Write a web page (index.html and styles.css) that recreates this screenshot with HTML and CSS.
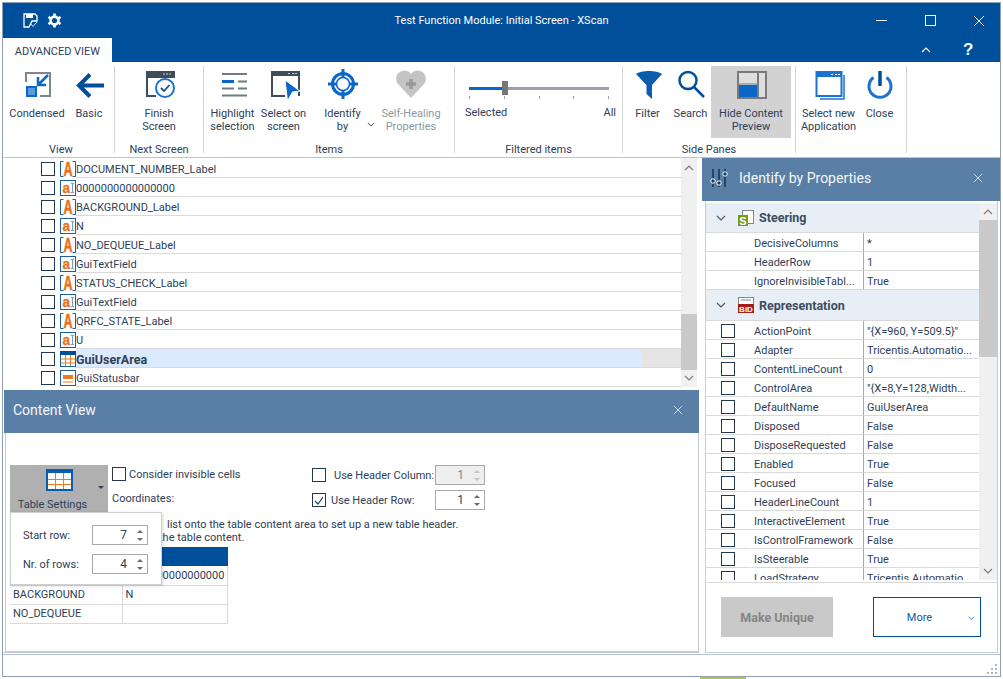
FILE: index.html
```html
<!DOCTYPE html>
<html lang="en">
<head>
    <meta charset="UTF-8">
    <title>Test Function Module: Initial Screen - XScan</title>
    <link rel="stylesheet" href="styles.css">
</head>
<body>
    <svg class="defs" width="0" height="0">
        <symbol id="ico-label" viewBox="0 0 16 16">
            <path d="M3.5 .5H.5V15.5H3.5M12.5 .5H15.5V15.5H12.5" fill="none" stroke="#1b5fa8"/>
            <text x="3.5" y="15" textLength="9" lengthAdjust="spacingAndGlyphs" class="ico-letter big">A</text>
        </symbol>
        <symbol id="ico-text" viewBox="0 0 16 16">
            <rect x=".5" y=".5" width="15" height="15" fill="#fff" stroke="#1b5fa8"/>
            <path d="M11 3.5H14M12.5 3.5V12.5M11 12.5H14" fill="none" stroke="#6f9ccc"/>
            <text x="2.5" y="13" textLength="7.5" lengthAdjust="spacingAndGlyphs" class="ico-letter">a</text>
        </symbol>
        <symbol id="ico-table" viewBox="0 0 16 16">
            <rect x=".5" y=".5" width="15" height="15" fill="#fff" stroke="#1b5fa8"/>
            <rect width="16" height="4" fill="#004f9b"/>
            <path d="M1 8H15M1 12H15M5.5 4V15M10.5 4V15" stroke="#ef7a1a"/>
        </symbol>
        <symbol id="ico-status" viewBox="0 0 16 16">
            <rect x=".5" y=".5" width="15" height="15" fill="#fff" stroke="#1b5fa8"/>
            <rect x="3" y="5" width="10" height="4" fill="#ef7a1a"/>
            <path d="M3 12H13" stroke="#ef7a1a"/>
        </symbol>
        <symbol id="ico-x" viewBox="0 0 12 12">
            <path d="M1 1L11 11M11 1L1 11" fill="none" stroke="currentColor"/>
        </symbol>
        <symbol id="ico-down" viewBox="0 0 10 6">
            <path d="M1 1L5 5L9 1" fill="none" stroke="currentColor" stroke-width="1.2"/>
        </symbol>
        <symbol id="ico-up" viewBox="0 0 10 6">
            <path d="M1 5L5 1L9 5" fill="none" stroke="currentColor" stroke-width="1.2"/>
        </symbol>
    </svg>

    <div class="window">
        <div class="titlebar">
            <div class="title-side quick-icons">
                <svg width="15" height="15" viewBox="0 0 15 15"><path d="M1 1H12L14 3V8H9L6 14H1Z" fill="none" stroke="#fff" stroke-width="1.3"/><rect x="3" y="1" width="7" height="4" fill="#fff"/><path d="M8 11L10 13.5L14 9" fill="none" stroke="#cfe0f2"/></svg>
                <svg width="15" height="15" viewBox="0 0 15 15"><circle cx="7.5" cy="7.5" r="3.9" fill="none" stroke="#fff" stroke-width="2.6"/><path d="M7.5 .5V3M7.5 12V14.5M1.4 4L3.6 5.3M11.4 9.7L13.6 11M1.4 11L3.6 9.7M11.4 5.3L13.6 4" stroke="#fff" stroke-width="2.6"/></svg>
            </div>
            <div class="title-text">Test Function Module: Initial Screen - XScan</div>
            <div class="title-side window-btns">
                <svg class="win-min" width="11" height="11" viewBox="0 0 11 11"><path d="M0 5.5H11" stroke="#fff"/></svg>
                <svg class="win-max" width="11" height="11" viewBox="0 0 11 11"><rect x=".5" y=".5" width="10" height="10" fill="none" stroke="#fff"/></svg>
                <svg class="win-close" width="12" height="12"><use href="#ico-x"/></svg>
            </div>
        </div>
        <div class="tabbar">
            <div class="tab">ADVANCED VIEW</div>
            <svg class="tab-collapse" width="10" height="6"><use href="#ico-up"/></svg>
            <div class="tab-help">?</div>
        </div>

        <div class="ribbon">
            <div class="group group-view">
                <div class="group-btns">
                    <div class="rbtn w-58">
                        <svg class="ico" viewBox="0 0 32 32"><path d="M5 14V5H29V28H19" fill="none" stroke="#7b8791" stroke-width="2"/><rect x="6" y="19" width="9" height="9" fill="#5b9be0" stroke="#0a66c8" stroke-width="2"/><path d="M27 7L17 17M17 9V17H25" fill="none" stroke="#0a66c8" stroke-width="2.5"/></svg>
                        <div class="rbtn-label">Condensed</div>
                    </div>
                    <div class="rbtn w-46">
                        <svg class="ico" viewBox="0 0 32 32"><path d="M31 17.5H7M17 6.5L6 17.5L17 28.5" fill="none" stroke="#004f9b" stroke-width="4"/></svg>
                        <div class="rbtn-label">Basic</div>
                    </div>
                </div>
                <div class="group-name">View</div>
            </div>
            <div class="group group-next">
                <div class="group-btns">
                    <div class="rbtn w-88">
                        <svg class="ico" viewBox="0 0 32 32"><path d="M4 4H31V9H4ZM4 9V28H13" fill="none" stroke="#3f4c5a" stroke-width="2"/><rect x="4" y="3" width="27" height="6" fill="#3f4c5a"/><path d="M23 6H25M26 6H28M20 6H22" stroke="#c7ced6"/><circle cx="22" cy="20" r="9" fill="#fff" stroke="#1a73d0" stroke-width="2"/><path d="M18 20L21 23L26.5 17" fill="none" stroke="#0e4f9b" stroke-width="1.8"/></svg>
                        <div class="rbtn-label">Finish<br>Screen</div>
                    </div>
                </div>
                <div class="group-name">Next Screen</div>
            </div>
            <div class="group group-items">
                <div class="group-btns">
                    <div class="rbtn w-53 ml-2">
                        <svg class="ico" viewBox="0 0 32 32"><path d="M5 6H30M21 13.5H30M5 20.5H17M21 20.5H30M5 27.5H30" stroke="#6f7b87" stroke-width="2"/><path d="M5 13.5H17" stroke="#0a66c8" stroke-width="3"/></svg>
                        <div class="rbtn-label">Highlight<br>selection</div>
                    </div>
                    <div class="rbtn w-49">
                        <svg class="ico" viewBox="0 0 32 32"><path d="M4 4H31V28M4 4V28H17" fill="none" stroke="#3f4c5a" stroke-width="2"/><rect x="3" y="3" width="28" height="5" fill="#3f4c5a"/><path d="M20 5.5H22M24 5.5H26M27 5.5H29" stroke="#c7ced6"/><path d="M17 12L32 23L24.5 24L19.5 33Z" fill="#0a66c8" stroke="#fff"/></svg>
                        <div class="rbtn-label">Select on<br>screen</div>
                    </div>
                    <div class="rbtn w-69">
                        <svg class="ico" viewBox="0 0 32 32"><circle cx="16" cy="16" r="10.5" fill="none" stroke="#0a66c8" stroke-width="3"/><circle cx="16" cy="16" r="6.5" fill="none" stroke="#0a66c8" stroke-width="1.5"/><path d="M16 1V10M16 22V31M1 16H10M22 16H31" stroke="#0a66c8" stroke-width="3"/></svg>
                        <div class="rbtn-label">Identify<br>by</div>
                        <svg class="rbtn-drop" width="8" height="5"><use href="#ico-down"/></svg>
                    </div>
                    <div class="rbtn w-68 is-disabled">
                        <svg class="ico" viewBox="0 0 32 32"><path d="M16 30L3 16C-2 9 4 2 10 2.5C13 2.7 15 4.5 16 6C17 4.5 19 2.7 22 2.5C28 2 34 9 29 16Z" fill="#c4c4c4"/><path d="M16 11V21M11 16H21" stroke="#9a9a9a" stroke-width="3.5"/></svg>
                        <div class="rbtn-label">Self-Healing<br>Properties</div>
                    </div>
                </div>
                <div class="group-name">Items</div>
            </div>
            <div class="group group-filter">
                <div class="slider">
                    <div class="slider-track"><div class="slider-fill"></div><div class="slider-thumb"></div></div>
                    <div class="slider-ticks"><i></i><i></i><i></i><i></i><i></i></div>
                    <div class="slider-labels"><span>Selected</span><span>All</span></div>
                </div>
                <div class="group-name">Filtered items</div>
            </div>
            <div class="group group-panes">
                <div class="group-btns">
                    <div class="rbtn w-45 ml-2">
                        <svg class="ico" viewBox="0 0 32 32"><path d="M4 6C9 2 25 2 30 6L20 17V31L14.5 26V17Z" fill="#0a5cad"/></svg>
                        <div class="rbtn-label">Filter</div>
                    </div>
                    <div class="rbtn w-41">
                        <svg class="ico" viewBox="0 0 32 32"><circle cx="13" cy="12.5" r="8.5" fill="none" stroke="#004f9b" stroke-width="2.5"/><path d="M19 19L29 29" stroke="#004f9b" stroke-width="2.5"/></svg>
                        <div class="rbtn-label">Search</div>
                    </div>
                    <div class="rbtn w-80 is-active">
                        <svg class="ico" viewBox="0 0 32 32"><rect x="3" y="4" width="28" height="26" fill="#dedede" stroke="#7a7a7a" stroke-width="2"/><path d="M23 4V30" stroke="#7a7a7a" stroke-width="2"/><path d="M3 16H23" stroke="#7a7a7a"/><rect x="4" y="17" width="18" height="12" fill="#0a66c8"/></svg>
                        <div class="rbtn-label">Hide Content<br>Preview</div>
                    </div>
                </div>
                <div class="group-name">Side Panes</div>
            </div>
            <div class="group group-app">
                <div class="group-btns">
                    <div class="rbtn w-61 ml-2">
                        <svg class="ico" viewBox="0 0 32 32"><rect x="3.5" y="4" width="25" height="24" fill="#fff" stroke="#1a73d0" stroke-width="2"/><rect x="3" y="4" width="26" height="5" fill="#1a73d0"/><path d="M18 6.5H20M22 6.5H24M25 6.5H27" stroke="#fff"/><path d="M31 7V31H7" fill="none" stroke="#1a73d0" stroke-width="1.5"/></svg>
                        <div class="rbtn-label">Select new<br>Application</div>
                    </div>
                    <div class="rbtn w-41">
                        <svg class="ico" viewBox="0 0 32 32"><path d="M9.5 9.5A11 11 0 1 0 22.5 9.5" fill="none" stroke="#1a73d0" stroke-width="3"/><path d="M16 3V18" stroke="#004f9b" stroke-width="3.5"/></svg>
                        <div class="rbtn-label">Close</div>
                    </div>
                </div>
            </div>
        </div>

        <div class="main">
            <div class="left">
                <div class="tree">
                    <div class="tree-rows">
                        <div class="tree-row"><span class="check"></span><svg class="row-ico"><use href="#ico-label"/></svg><div class="row-body">DOCUMENT_NUMBER_Label</div></div>
                        <div class="tree-row"><span class="check"></span><svg class="row-ico"><use href="#ico-text"/></svg><div class="row-body">0000000000000000</div></div>
                        <div class="tree-row"><span class="check"></span><svg class="row-ico"><use href="#ico-label"/></svg><div class="row-body">BACKGROUND_Label</div></div>
                        <div class="tree-row"><span class="check"></span><svg class="row-ico"><use href="#ico-text"/></svg><div class="row-body">N</div></div>
                        <div class="tree-row"><span class="check"></span><svg class="row-ico"><use href="#ico-label"/></svg><div class="row-body">NO_DEQUEUE_Label</div></div>
                        <div class="tree-row"><span class="check"></span><svg class="row-ico"><use href="#ico-text"/></svg><div class="row-body">GuiTextField</div></div>
                        <div class="tree-row"><span class="check"></span><svg class="row-ico"><use href="#ico-label"/></svg><div class="row-body">STATUS_CHECK_Label</div></div>
                        <div class="tree-row"><span class="check"></span><svg class="row-ico"><use href="#ico-text"/></svg><div class="row-body">GuiTextField</div></div>
                        <div class="tree-row"><span class="check"></span><svg class="row-ico"><use href="#ico-label"/></svg><div class="row-body">QRFC_STATE_Label</div></div>
                        <div class="tree-row"><span class="check"></span><svg class="row-ico"><use href="#ico-text"/></svg><div class="row-body">U</div></div>
                        <div class="tree-row is-selected"><span class="check"></span><svg class="row-ico"><use href="#ico-table"/></svg><div class="row-body"><div class="row-hilite">GuiUserArea</div></div></div>
                        <div class="tree-row"><span class="check"></span><svg class="row-ico"><use href="#ico-status"/></svg><div class="row-body">GuiStatusbar</div></div>
                    </div>
                    <div class="scrollbar tree-scroll">
                        <svg class="scroll-arrow" width="10" height="6"><use href="#ico-up"/></svg>
                        <div class="scroll-thumb"></div>
                        <svg class="scroll-arrow" width="10" height="6"><use href="#ico-down"/></svg>
                    </div>
                </div>

                <div class="pane-head content-head">
                    <span>Content View</span>
                    <svg class="pane-x" width="10" height="10"><use href="#ico-x"/></svg>
                </div>
                <div class="content-body">
                    <div class="tools">
                        <div class="table-btn">
                            <svg class="table-btn-ico" width="27" height="22" viewBox="0 0 27 22"><rect x="1" y="1" width="25" height="20" fill="#fff" stroke="#0a5cad" stroke-width="2"/><rect y="0" width="27" height="4" fill="#0a5cad"/><path d="M2 10.5H25M2 15.5H25M9.5 4V20M17.5 4V20" stroke="#ef7a1a"/></svg>
                            <div>Table Settings</div>
                            <span class="table-btn-caret"></span>
                        </div>
                        <div class="tool-col">
                            <label class="opt"><span class="check"></span>Consider invisible cells</label>
                            <div class="coords">Coordinates:</div>
                        </div>
                        <div class="header-col">
                            <div class="head-opt">
                                <span class="check"></span>
                                <span class="head-label">Use Header Column:</span>
                                <div class="spin spin-sm is-off"><span>1</span><div class="spin-arrows"><i class="up"></i><i class="down"></i></div></div>
                            </div>
                            <div class="head-opt">
                                <span class="check is-on"><svg width="10" height="9" viewBox="0 0 10 9"><path d="M1 5L4 8L9 1" fill="none" stroke="#2e4057" stroke-width="1.2"/></svg></span>
                                <span class="head-label tight">Use Header Row:</span>
                                <div class="spin spin-sm"><span>1</span><div class="spin-arrows"><i class="up"></i><i class="down"></i></div></div>
                            </div>
                        </div>
                    </div>
                    <div class="hint">
                        <div>list onto the table content area to set up a new table header.</div>
                        <div class="hint-second">the table content.</div>
                    </div>
                    <table class="preview">
                        <tr class="preview-head"><th></th><th></th></tr>
                        <tr><td></td><td>0000000000000000</td></tr>
                        <tr><td>BACKGROUND</td><td>N</td></tr>
                        <tr><td>NO_DEQUEUE</td><td></td></tr>
                    </table>
                    <div class="flyout">
                        <div class="fly-row"><span>Start row:</span><div class="spin"><span>7</span><div class="spin-arrows"><i class="up"></i><i class="down"></i></div></div></div>
                        <div class="fly-row"><span>Nr. of rows:</span><div class="spin"><span>4</span><div class="spin-arrows"><i class="up"></i><i class="down"></i></div></div></div>
                    </div>
                </div>
            </div>

            <div class="right">
                <div class="pane-head props-head">
                    <svg class="props-ico" width="18" height="20" viewBox="0 0 18 20"><path d="M3 1V19M9 1V19M15 1V19" stroke="#12395f" stroke-width="1.6"/><circle cx="3" cy="13" r="2.2" fill="#12395f" stroke="#fff"/><circle cx="9" cy="15" r="2.2" fill="#12395f" stroke="#fff"/><circle cx="15" cy="6" r="2.2" fill="#12395f" stroke="#fff"/></svg>
                    <span>Identify by Properties</span>
                    <svg class="pane-x" width="10" height="10"><use href="#ico-x"/></svg>
                </div>
                <div class="props-body">
                    <div class="props-scrollarea">
                        <div class="props-grid">
                            <div class="section section-first">
                                <svg class="sec-chev" width="10" height="6"><use href="#ico-down"/></svg>
                                <svg class="sec-ico" width="16" height="16" viewBox="0 0 16 16"><rect x="4.5" y=".5" width="11" height="13" fill="#fff" stroke="#7b8791"/><rect y="5" width="10" height="11" fill="#7a9a16"/><text x="5" y="15" text-anchor="middle" class="sec-letter big">S</text></svg>
                                <span>Steering</span>
                            </div>
                            <div class="prop"><div class="prop-check"></div><div class="prop-name">DecisiveColumns</div><div class="prop-val">*</div></div>
                            <div class="prop"><div class="prop-check"></div><div class="prop-name">HeaderRow</div><div class="prop-val">1</div></div>
                            <div class="prop"><div class="prop-check"></div><div class="prop-name">IgnoreInvisibleTabl...</div><div class="prop-val">True</div></div>
                            <div class="section">
                                <svg class="sec-chev" width="10" height="6"><use href="#ico-down"/></svg>
                                <svg class="sec-ico" width="16" height="16" viewBox="0 0 16 16"><rect x=".5" y=".5" width="15" height="15" fill="#fff" stroke="#7b8791"/><path d="M3 3H13" stroke="#7b8791"/><rect y="7" width="16" height="9" fill="#a51c1c"/><text x="8" y="15" text-anchor="middle" class="sec-letter">BiD</text></svg>
                                <span>Representation</span>
                            </div>
                            <div class="prop"><div class="prop-check"><span class="check"></span></div><div class="prop-name">ActionPoint</div><div class="prop-val">"{X=960, Y=509.5}"</div></div>
                            <div class="prop"><div class="prop-check"><span class="check"></span></div><div class="prop-name">Adapter</div><div class="prop-val">Tricentis.Automatio...</div></div>
                            <div class="prop"><div class="prop-check"><span class="check"></span></div><div class="prop-name">ContentLineCount</div><div class="prop-val">0</div></div>
                            <div class="prop"><div class="prop-check"><span class="check"></span></div><div class="prop-name">ControlArea</div><div class="prop-val">"{X=8,Y=128,Width...</div></div>
                            <div class="prop"><div class="prop-check"><span class="check"></span></div><div class="prop-name">DefaultName</div><div class="prop-val">GuiUserArea</div></div>
                            <div class="prop"><div class="prop-check"><span class="check"></span></div><div class="prop-name">Disposed</div><div class="prop-val">False</div></div>
                            <div class="prop"><div class="prop-check"><span class="check"></span></div><div class="prop-name">DisposeRequested</div><div class="prop-val">False</div></div>
                            <div class="prop"><div class="prop-check"><span class="check"></span></div><div class="prop-name">Enabled</div><div class="prop-val">True</div></div>
                            <div class="prop"><div class="prop-check"><span class="check"></span></div><div class="prop-name">Focused</div><div class="prop-val">False</div></div>
                            <div class="prop"><div class="prop-check"><span class="check"></span></div><div class="prop-name">HeaderLineCount</div><div class="prop-val">1</div></div>
                            <div class="prop"><div class="prop-check"><span class="check"></span></div><div class="prop-name">InteractiveElement</div><div class="prop-val">True</div></div>
                            <div class="prop"><div class="prop-check"><span class="check"></span></div><div class="prop-name">IsControlFramework</div><div class="prop-val">False</div></div>
                            <div class="prop"><div class="prop-check"><span class="check"></span></div><div class="prop-name">IsSteerable</div><div class="prop-val">True</div></div>
                            <div class="prop"><div class="prop-check"><span class="check"></span></div><div class="prop-name">LoadStrategy</div><div class="prop-val">Tricentis.Automatio...</div></div>
                        </div>
                        <div class="scrollbar props-scroll">
                            <svg class="scroll-arrow" width="10" height="6"><use href="#ico-up"/></svg>
                            <div class="scroll-thumb"></div>
                            <svg class="scroll-arrow" width="10" height="6"><use href="#ico-down"/></svg>
                        </div>
                    </div>
                    <div class="props-foot">
                        <div class="btn-unique">Make Unique</div>
                        <div class="btn-more"><span>More</span><svg width="7" height="4"><use href="#ico-down"/></svg></div>
                    </div>
                </div>
            </div>
        </div>

        <div class="statusbar">
            <svg width="12" height="12" viewBox="0 0 12 12" fill="#b5b5b5"><rect x="9" y="1" width="2" height="2"/><rect x="5" y="5" width="2" height="2"/><rect x="9" y="5" width="2" height="2"/><rect x="1" y="9" width="2" height="2"/><rect x="5" y="9" width="2" height="2"/><rect x="9" y="9" width="2" height="2"/></svg>
        </div>
    </div>
    <div class="desktop-bit"></div>
</body>
</html>
```

FILE: styles.css
```css
* {
    box-sizing: border-box;
}
body {
    margin: 0;
    background-color: #fff;
    font-family: Roboto, sans-serif;
    font-size: 11px;
    color: #2e4057;
}
.defs {
    position: absolute;
}
.desktop-bit {
    position: absolute;
    left: 700px;
    top: 677px;
    width: 46px;
    height: 2px;
    background-color: #b5c832;
}
.ico-letter {
    font-family: "Liberation Sans", sans-serif;
    font-weight: bold;
    font-size: 14px;
    fill: #e8701a;
    stroke: #e8701a;
    stroke-width: 0.3;
}
.ico-letter.big {
    font-size: 20px;
    stroke-width: 0.6;
}
.sec-letter {
    font-family: "Liberation Sans", sans-serif;
    font-weight: bold;
    font-size: 8px;
    fill: #fff;
}
.sec-letter.big {
    font-size: 11px;
}
.window {
    width: 999px;
    height: 675px;
    margin: 2px 0 0 2px;
    border: 1px solid #8fa0b3;
    display: flex;
    flex-direction: column;
    background-color: #fff;
}

/* title bar */
.titlebar {
    height: 35px;
    background-color: #004f9b;
    display: flex;
    align-items: center;
    color: #fff;
}
.title-side {
    width: 200px;
    display: flex;
    align-items: center;
}
.quick-icons {
    padding-left: 20px;
    gap: 9px;
}
.title-text {
    flex: 1;
    text-align: center;
    font-size: 11px;
}
.window-btns {
    color: #fff;
    padding-left: 76px;
}
.win-max {
    margin-left: 38px;
}
.win-close {
    margin-left: 37px;
}
.tabbar {
    height: 24px;
    background-color: #004f9b;
    display: flex;
    align-items: center;
    color: #fff;
}
.tab {
    width: 109px;
    height: 24px;
    line-height: 27px;
    background-color: #fff;
    color: #2e4057;
    text-align: center;
    font-size: 11px;
}
.tab-collapse {
    margin-left: 809px;
}
.tab-help {
    margin-left: 32px;
    font-family: "Liberation Sans", sans-serif;
    font-size: 17px;
    font-weight: bold;
}

/* ribbon */
.ribbon {
    height: 96px;
    display: flex;
    border-bottom: 1px solid #bfc4c9;
}
.group {
    margin-top: 4px;
    height: 87px;
    border-right: 1px solid #d4d4d4;
    display: flex;
    flex-direction: column;
    flex-shrink: 0;
}
.group-view { width: 112px; padding-left: 5px; }
.group-next { width: 89px; }
.group-items { width: 251px; }
.group-filter { width: 168px; }
.group-panes { width: 173px; }
.group-app { width: 111px; }
.group-btns {
    flex: 1;
    display: flex;
}
.group-name {
    height: 15px;
    text-align: center;
    line-height: 15px;
    margin-bottom: -4px;
}
.rbtn {
    position: relative;
    display: flex;
    flex-direction: column;
    align-items: center;
    padding-top: 2px;
    flex-shrink: 0;
}
.w-41 { width: 41px; }
.w-45 { width: 45px; }
.w-46 { width: 46px; }
.w-49 { width: 49px; }
.w-53 { width: 53px; }
.w-58 { width: 58px; }
.w-61 { width: 61px; }
.w-68 { width: 68px; }
.w-69 { width: 69px; }
.w-80 { width: 80px; }
.w-88 { width: 88px; }
.ml-2 { margin-left: 2px; }
.ico {
    width: 32px;
    height: 32px;
    flex-shrink: 0;
}
.rbtn-label {
    margin-top: 7px;
    line-height: 13px;
    text-align: center;
    white-space: nowrap;
}
.rbtn-drop {
    position: absolute;
    right: 2px;
    top: 56px;
    color: #2e4057;
}
.is-disabled .rbtn-label {
    color: #8e97a1;
}
.rbtn.is-active {
    background-color: #d2d2d2;
    height: 72px;
}

/* slider */
.slider {
    flex: 1;
    padding: 21px 0 0 10px;
}
.slider-track {
    position: relative;
    width: 140px;
    height: 3px;
    background-color: #9aa1a8;
    margin-left: 4px;
}
.slider-fill {
    width: 36px;
    height: 3px;
    background-color: #0a66c8;
}
.slider-thumb {
    position: absolute;
    left: 33px;
    top: -6px;
    width: 6px;
    height: 14px;
    background-color: #767676;
}
.slider-ticks {
    width: 140px;
    margin: 6px 0 0 4px;
    display: flex;
    justify-content: space-between;
}
.slider-ticks i {
    width: 1px;
    height: 3px;
    background-color: #9aa1a8;
}
.slider-labels {
    width: 151px;
    margin-top: 7px;
    display: flex;
    justify-content: space-between;
}

/* main area */
.main {
    flex: 1;
    display: flex;
    min-height: 0;
}
.left {
    width: 697px;
    display: flex;
    flex-direction: column;
    border-bottom: 1px solid #c5ccd4;
}
.right {
    width: 298px;
    margin-left: 2px;
    display: flex;
    flex-direction: column;
}
.tree {
    height: 230px;
    display: flex;
    padding: 1px 3px 0 0;
}
.tree-rows {
    width: 678px;
}
.tree-row {
    height: 19px;
    display: flex;
    align-items: center;
    padding-left: 38px;
}
.check {
    display: inline-block;
    width: 14px;
    height: 14px;
    border: 1px solid #23384f;
    flex-shrink: 0;
    background-color: #fff;
}
.row-ico {
    width: 16px;
    height: 16px;
    margin-left: 5px;
    flex-shrink: 0;
}
.row-body {
    flex: 1;
    height: 19px;
    line-height: 21px;
    border-bottom: 1px solid #d9d9d9;
    white-space: nowrap;
}
.is-selected .row-body {
    background-color: #e5e5e5;
}
.row-hilite {
    width: 565px;
    height: 18px;
    background-color: #dbeafd;
    font-size: 12.5px;
    font-weight: bold;
}
.scrollbar {
    display: flex;
    flex-direction: column;
    align-items: center;
    background-color: #f0f0f0;
    color: #7d7d7d;
}
.scroll-arrow {
    flex-shrink: 0;
}
.scroll-thumb {
    align-self: stretch;
    background-color: #c9c9c9;
}
.tree-scroll {
    width: 16px;
    height: 229px;
    margin-top: -1px;
    padding-top: 7px;
}
.tree-scroll .scroll-thumb {
    height: 56px;
    margin: 143px 0 5px;
}

/* pane headers */
.pane-head {
    display: flex;
    align-items: center;
    background-color: #5a7fa6;
    color: #f4f7fa;
    font-size: 14px;
    flex-shrink: 0;
    padding-bottom: 4px;
}
.pane-x {
    margin-left: auto;
    color: #e6edf4;
}
.content-head {
    height: 43px;
    margin: 2px 0 0 1px;
    padding-left: 9px;
    padding-right: 16px;
    width: 695px;
}

/* content view */
.content-body {
    position: relative;
    flex: 1;
    margin-left: 2px;
    width: 694px;
    border: 1px solid #c5ccd4;
    border-top: none;
    padding: 32px 0 0 4px;
}
.tools {
    display: flex;
    height: 48px;
}
.table-btn {
    position: relative;
    width: 98px;
    height: 48px;
    background-color: #b0b0b0;
    padding-top: 4px;
    text-align: center;
    padding-right: 13px;
    line-height: 13px;
}
.table-btn-ico {
    display: block;
    margin: 0 auto 7px;
    position: relative;
    left: 7px;
}
.table-btn-caret {
    position: absolute;
    right: 4px;
    top: 21px;
    border-left: 3px solid transparent;
    border-right: 3px solid transparent;
    border-top: 3px solid #2e4057;
}
.tool-col {
    width: 204px;
    padding: 2px 0 0 4px;
}
.opt {
    display: flex;
    align-items: center;
    gap: 3px;
    height: 14px;
}
.coords {
    margin-top: 10px;
    line-height: 15px;
}
.head-opt {
    display: flex;
    align-items: center;
    height: 20px;
    margin-bottom: 5px;
}
.head-label {
    width: 109px;
    padding-left: 8px;
    white-space: nowrap;
}
.head-label.tight {
    padding-left: 5px;
}
.is-on {
    display: flex;
    align-items: center;
    justify-content: center;
}
.spin {
    width: 56px;
    height: 20px;
    border: 1px solid #a9a9a9;
    background-color: #fff;
    display: flex;
    align-items: center;
    justify-content: flex-end;
    font-size: 12px;
}
.spin-sm {
    width: 50px;
}
.spin.is-off {
    background-color: #eee;
    color: #7d8893;
}
.spin-arrows {
    width: 14px;
    margin-left: 6px;
    display: flex;
    flex-direction: column;
    align-items: center;
    gap: 5px;
}
.spin-arrows i {
    border-left: 3px solid transparent;
    border-right: 3px solid transparent;
}
.spin-arrows .up {
    border-bottom: 3px solid #6a6a6a;
}
.spin-arrows .down {
    border-top: 3px solid #6a6a6a;
}
.is-off .spin-arrows .up {
    border-bottom-color: #c4c4c4;
}
.is-off .spin-arrows .down {
    border-top-color: #c4c4c4;
}
.hint {
    margin-top: 5px;
    padding-left: 157px;
    line-height: 13px;
    white-space: nowrap;
}
.hint-second {
    margin-left: -8px;
}
.preview {
    margin-top: 3px;
    width: 218px;
    border-collapse: collapse;
    table-layout: fixed;
}
.preview th {
    height: 19px;
    background-color: #004f9b;
    padding: 0;
}
.preview th:first-child {
    width: 112px;
}
.preview td {
    height: 19px;
    padding: 0 3px;
    border: 1px solid #d9d9d9;
    border-top: none;
    white-space: nowrap;
    overflow: hidden;
}
.preview td:first-child {
    border-left: none;
}
.flyout {
    position: absolute;
    left: 4px;
    top: 79px;
    width: 152px;
    height: 73px;
    background-color: #fff;
    border: 1px solid #d0d0d0;
    box-shadow: 1px 1px 3px rgba(0, 0, 0, 0.15);
    padding: 12px 13px 0 12px;
}
.fly-row {
    display: flex;
    align-items: center;
    justify-content: space-between;
    margin-bottom: 9px;
}

/* identify by properties */
.props-head {
    height: 43px;
    padding-left: 8px;
    padding-right: 17px;
    gap: 11px;
}
.props-ico {
    flex-shrink: 0;
}
.props-body {
    flex: 1;
    margin-left: 3px;
    width: 293px;
    border: 1px solid #c5ccd4;
    border-top: none;
    display: flex;
    flex-direction: column;
    padding-top: 2px;
}
.props-scrollarea {
    height: 377px;
    display: flex;
}
.props-grid {
    width: 273px;
    overflow: hidden;
}
.section {
    height: 31px;
    background-color: #e8eef5;
    display: flex;
    align-items: center;
    padding-left: 10px;
    font-size: 12.5px;
    font-weight: bold;
    border-bottom: 1px solid #d9d9d9;
    color: #3d4d5e;
}
.section-first {
    height: 30px;
}
.sec-chev {
    color: #4c5b6b;
    margin-right: 12px;
}
.sec-ico {
    margin-right: 5px;
}
.prop {
    height: 19px;
    display: flex;
    line-height: 21px;
}
.prop-check {
    width: 44px;
    margin-right: 1px;
    border-bottom: 1px solid #d9d9d9;
    padding: 3px 0 0 15px;
    line-height: 14px;
    flex-shrink: 0;
}
.prop-name {
    width: 113px;
    padding-left: 3px;
    border-bottom: 1px solid #d9d9d9;
    border-right: 1px solid #a9a9a9;
    white-space: nowrap;
    overflow: hidden;
    flex-shrink: 0;
}
.prop-val {
    flex: 1;
    padding-left: 3px;
    border-bottom: 1px solid #d9d9d9;
    white-space: nowrap;
    overflow: hidden;
}
.props-scroll {
    width: 18px;
    margin-left: 0;
    padding-top: 6px;
}
.props-scroll .scroll-thumb {
    height: 137px;
    margin: 5px 0 211px;
}
.props-foot {
    flex: 1;
    border-top: 1px solid #d9d9d9;
    margin-top: 2px;
    padding: 14px 0 0 15px;
    display: flex;
}
.btn-unique {
    width: 112px;
    height: 40px;
    background-color: #c9c9c9;
    color: #858585;
    font-size: 12.5px;
    font-weight: bold;
    text-align: center;
    line-height: 41px;
}
.btn-more {
    position: relative;
    width: 108px;
    height: 40px;
    margin-left: 40px;
    border: 1px solid #004f9b;
    color: #0a5cad;
    text-align: center;
    line-height: 40px;
    padding-right: 15px;
}
.btn-more svg {
    position: absolute;
    right: 5px;
    top: 18px;
}
.statusbar {
    height: 22px;
    margin-top: 1px;
    border-top: 1px solid #b6c2cf;
    display: flex;
    justify-content: flex-end;
    align-items: flex-end;
    padding: 0 2px 1px 0;
}
```
